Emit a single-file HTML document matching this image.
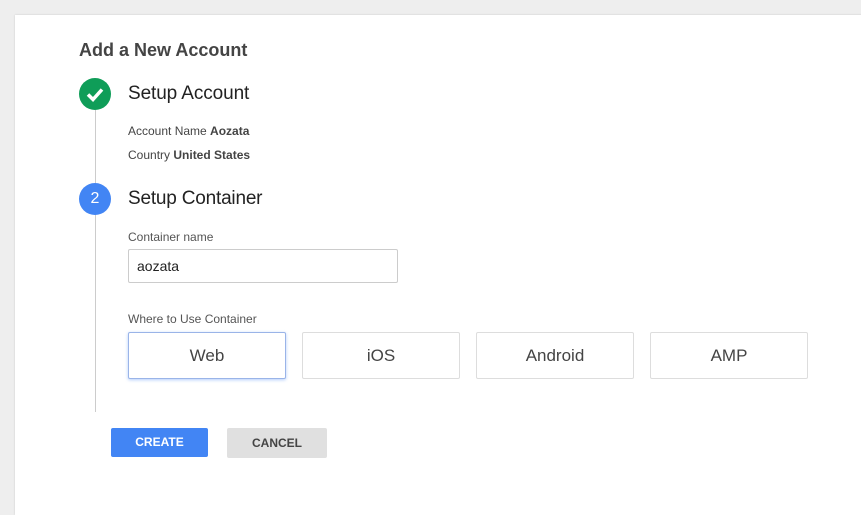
<!DOCTYPE html>
<html><head><style>
body{margin:0;width:861px;height:470px;background:#eeeeee;font-family:"Liberation Sans",Arial,sans-serif;position:relative;overflow:hidden}
.card{position:absolute;left:15px;top:15px;width:900px;height:500px;background:#fff;box-shadow:0 0 2px rgba(0,0,0,.15)}
.a{position:absolute;white-space:nowrap}
.line{position:absolute;left:95px;width:1px;background:#ccc}
.circ{position:absolute;width:32px;height:32px;border-radius:50%;left:79px}
.box{position:absolute;top:332px;width:156px;height:45px;border:1px solid #ddd;border-radius:2px;font-size:17px;color:#444;text-align:center;line-height:45px;background:#fff}
</style></head><body>
<div class="card"></div>
<div class="a" style="left:79px;top:40px;font-size:18px;font-weight:bold;color:#444">Add a New Account</div>
<div class="line" style="top:110px;height:77px"></div>
<div class="line" style="top:214px;height:198px"></div>
<div class="circ" style="top:78px;background:#0f9d58"><svg width="32" height="32"><path d="M9 16.5l5 5 9-10" stroke="#fff" stroke-width="3.5" fill="none"/></svg></div>
<div class="a" style="left:128px;top:83px;font-size:19px;color:#222;letter-spacing:-0.1px">Setup Account</div>
<div class="a" style="left:128px;top:124px;font-size:12px;color:#444">Account Name <b>Aozata</b></div>
<div class="a" style="left:128px;top:148px;font-size:12px;color:#444">Country <b>United States</b></div>
<div class="circ" style="top:183px;background:#4285f4;color:#fff;font-size:16px;text-align:center;line-height:32px">2</div>
<div class="a" style="left:128px;top:188px;font-size:19px;color:#222;letter-spacing:-0.2px">Setup Container</div>
<div class="a" style="left:128px;top:230px;font-size:12px;color:#555">Container name</div>
<div class="a" style="left:128px;top:249px;width:268px;height:32px;border:1px solid #ccc;border-radius:2px;font-size:14px;color:#222;line-height:32px;text-indent:8px">aozata</div>
<div class="a" style="left:128px;top:312px;font-size:12px;color:#555">Where to Use Container</div>
<div class="box" style="left:128px;border-color:#9ab4e8;box-shadow:0 1px 3px rgba(66,133,244,.4)">Web</div>
<div class="box" style="left:302px">iOS</div>
<div class="box" style="left:476px">Android</div>
<div class="box" style="left:650px">AMP</div>
<div class="a" style="left:111px;top:428px;width:97px;height:29px;background:#4285f4;border-radius:2px;color:#fff;font-size:12px;font-weight:bold;text-align:center;line-height:29px">CREATE</div>
<div class="a" style="left:227px;top:428px;width:100px;height:30px;background:#e0e0e0;border-radius:2px;color:#444;font-size:12px;font-weight:bold;text-align:center;line-height:30px">CANCEL</div>
</body></html>
